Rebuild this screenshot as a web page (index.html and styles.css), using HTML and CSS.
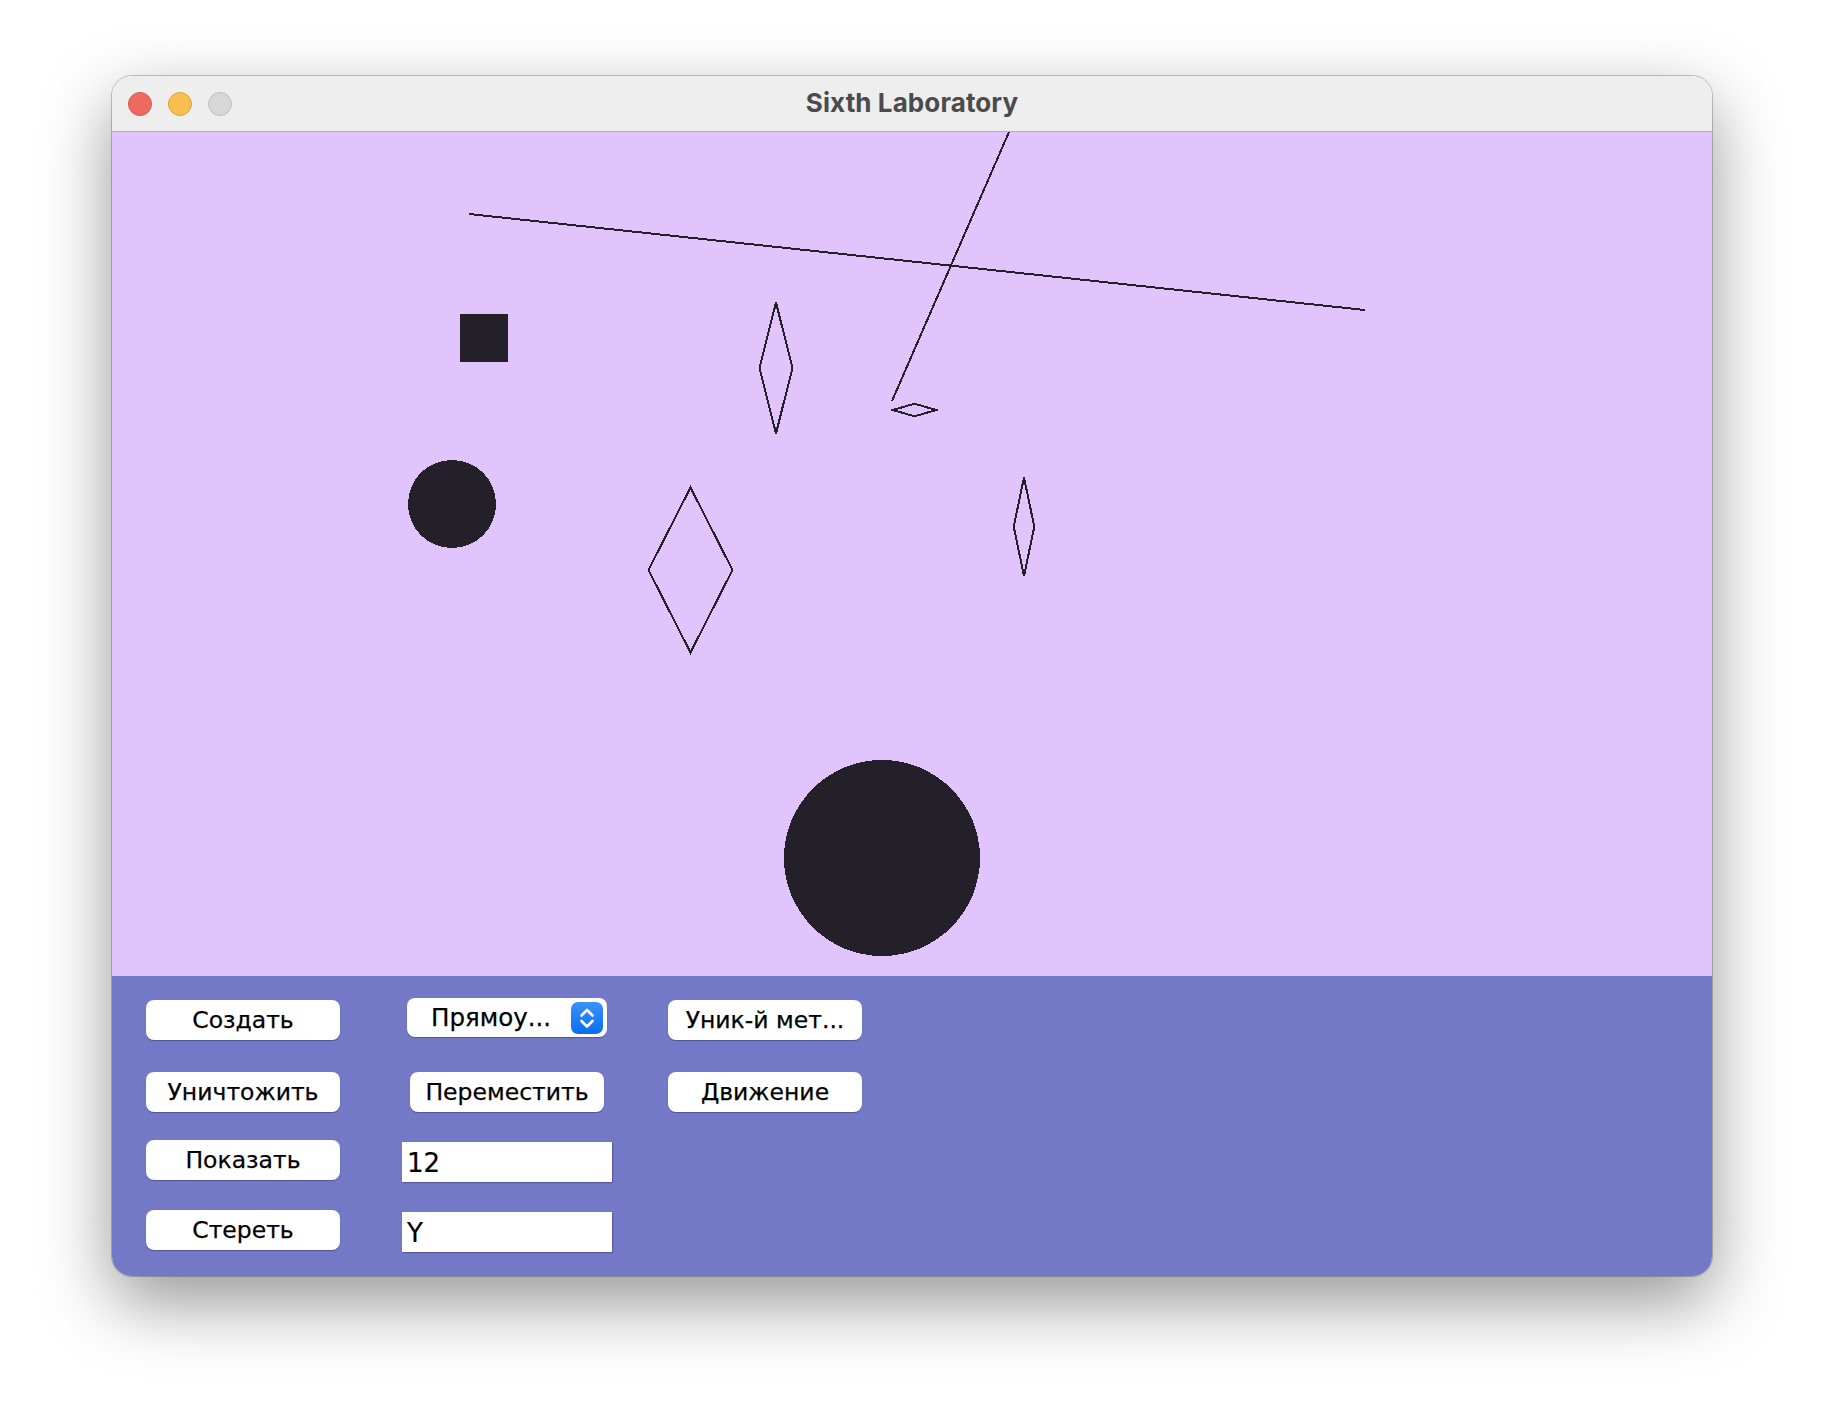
FILE: index.html
```html
<!DOCTYPE html>
<html lang="ru">
<head>
<meta charset="utf-8">
<title>Sixth Laboratory</title>
<link rel="stylesheet" href="styles.css">
</head>
<body>
<div class="window">
  <div class="titlebar">
    <div class="lights">
      <span class="light red"></span>
      <span class="light yellow"></span>
      <span class="light gray"></span>
    </div>
    <div class="title">Sixth Laboratory</div>
    <div class="spacer"></div>
  </div>
  <div class="canvas">
    <svg class="drawing" width="1600" height="844" viewBox="0 0 1600 844">
      <g class="shapes">
        <line x1="357" y1="82" x2="1253" y2="178" class="stroke"/>
        <line x1="897" y1="0" x2="780" y2="269" class="stroke"/>
        <rect x="348" y="182" width="48" height="48" class="fill"/>
        <polygon points="664,170.5 680.5,236 664,301.5 647.5,236" class="stroke"/>
        <polygon points="802.5,271.7 824.2,278 802.5,284.3 780.8,278" class="stroke"/>
        <circle cx="340" cy="372" r="44" class="fill"/>
        <polygon points="578.5,355.5 620.5,438 578.5,520.5 536.5,438" class="stroke"/>
        <polygon points="912,345.4 922.3,394.7 912,444 901.7,394.7" class="stroke"/>
        <circle cx="770" cy="726" r="98" class="fill"/>
      </g>
    </svg>
  </div>
  <div class="panel">
    <div class="controls">
      <div class="btn c1">Создать</div>
      <div class="combo c2">
        <span class="combo-text">Прямоу...</span>
        <span class="stepper">
          <svg width="32" height="32" viewBox="0 0 32 32">
            <polyline points="10.5,13.5 16,8 21.5,13.5" class="chev"/>
            <polyline points="10.5,19 16,24.5 21.5,19" class="chev"/>
          </svg>
        </span>
      </div>
      <div class="btn c3">Уник-й мет...</div>

      <div class="btn c1">Уничтожить</div>
      <div class="btn c2">Переместить</div>
      <div class="btn c3">Движение</div>

      <div class="btn c1">Показать</div>
      <div class="field c2">12</div>

      <div class="btn c1">Стереть</div>
      <div class="field c2">Y</div>
    </div>
  </div>
</div>
</body>
</html>
```

FILE: styles.css
```css
html, body {
  margin: 0;
  padding: 0;
  background: #ffffff;
}

body {
  width: 1824px;
  height: 1424px;
  padding: 76px 0 0 112px;
  box-sizing: border-box;
  overflow: hidden;
  font-family: "DejaVu Sans", "Liberation Sans", sans-serif;
}

.window {
  width: 1600px;
  height: 1200px;
  border-radius: 20px;
  overflow: hidden;
  display: flex;
  flex-direction: column;
  box-shadow: 0 0 0 1px rgba(0, 0, 0, 0.22), 0 26px 70px rgba(0, 0, 0, 0.42);
}

.titlebar {
  height: 55px;
  flex: 0 0 55px;
  background: #edeeed;
  border-bottom: 1px solid #b9a3cf;
  display: grid;
  grid-template-columns: 1fr auto 1fr;
  align-items: center;
}

.lights {
  display: flex;
  gap: 16px;
  padding-left: 16px;
}

.light {
  width: 22px;
  height: 22px;
  border-radius: 50%;
  border: 1px solid transparent;
}

.light.red {
  background: #ee6a5f;
  border-color: #d5574c;
}

.light.yellow {
  background: #f6bf50;
  border-color: #d9a33f;
}

.light.gray {
  background: #d6d7d6;
  border-color: #c0c0c0;
}

.title {
  font-family: "Inter", "Open Sans", sans-serif;
  font-weight: 700;
  font-size: 26px;
  color: #4b4b4b;
  letter-spacing: 0.1px;
  margin-top: -3px;
}

.canvas {
  height: 844px;
  flex: 0 0 844px;
  background: #e0c4fb;
}

.drawing {
  display: block;
  shape-rendering: crispEdges;
}

.stroke {
  fill: none;
  stroke: #232029;
  stroke-width: 2;
}

.fill {
  fill: #232029;
}

.panel {
  flex: 1 1 auto;
  background: #7479c7;
  padding: 24px 0 0 34px;
}

.controls {
  display: grid;
  grid-template-columns: 194px 62px 210px 56px 194px;
  grid-template-rows: 72px 68px 70px 40px;
  align-items: start;
}

.c1 { grid-column: 1; }
.c2 { grid-column: 3; justify-self: center; }
.c3 { grid-column: 5; }

.btn {
  width: 194px;
  height: 40px;
  background: #ffffff;
  border-radius: 8px;
  box-shadow: 0 1px 1px rgba(20, 20, 60, 0.35);
  color: #000;
  font-size: 23.5px;
  line-height: 40px;
  text-align: center;
  white-space: nowrap;
  -webkit-text-stroke: 0.25px #000;
}

.combo {
  width: 200px;
  height: 39px;
  margin-top: -2px;
  background: #ffffff;
  border-radius: 8px;
  box-shadow: 0 1px 1px rgba(20, 20, 60, 0.35);
  display: flex;
  align-items: center;
  justify-content: space-between;
  padding: 0 4px 0 24px;
  box-sizing: border-box;
  font-size: 24.5px;
  color: #000;
  -webkit-text-stroke: 0.25px #000;
}

.stepper {
  width: 32px;
  height: 32px;
  border-radius: 7px;
  background: linear-gradient(#3a93fa, #0a6cf3);
  display: block;
}

.stepper svg {
  display: block;
}

.chev {
  fill: none;
  stroke: #ffffff;
  stroke-width: 2.6;
  stroke-linecap: round;
  stroke-linejoin: round;
}

.field {
  width: 210px;
  height: 40px;
  margin-top: 2px;
  background: #ffffff;
  box-shadow: 1px 1px 1px rgba(20, 20, 60, 0.3);
  box-sizing: border-box;
  padding-left: 5px;
  font-size: 26px;
  line-height: 42px;
  color: #000;
  -webkit-text-stroke: 0.2px #000;
}
```
